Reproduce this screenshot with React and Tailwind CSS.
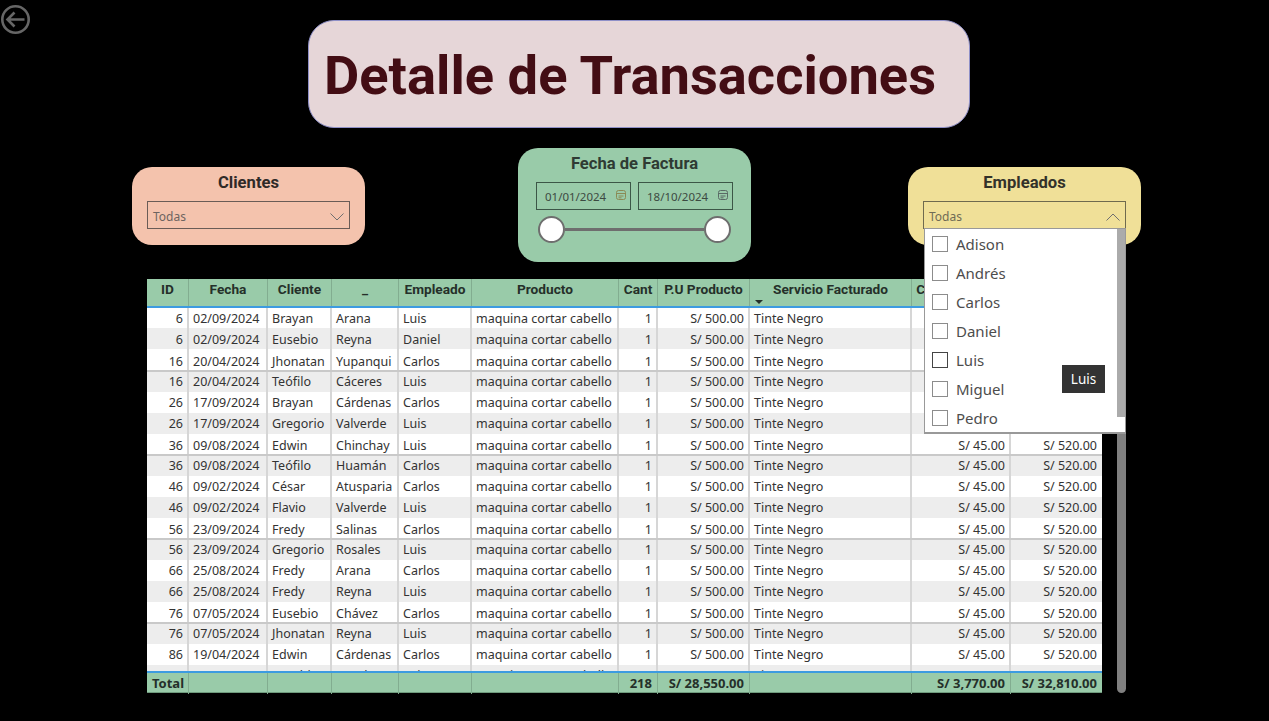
import React from "react";

const rows = [
  ["6", "02/09/2024", "Brayan", "Arana", "Luis"],
  ["6", "02/09/2024", "Eusebio", "Reyna", "Daniel"],
  ["16", "20/04/2024", "Jhonatan", "Yupanqui", "Carlos"],
  ["16", "20/04/2024", "Teófilo", "Cáceres", "Luis"],
  ["26", "17/09/2024", "Brayan", "Cárdenas", "Carlos"],
  ["26", "17/09/2024", "Gregorio", "Valverde", "Luis"],
  ["36", "09/08/2024", "Edwin", "Chinchay", "Luis"],
  ["36", "09/08/2024", "Teófilo", "Huamán", "Carlos"],
  ["46", "09/02/2024", "César", "Atusparia", "Carlos"],
  ["46", "09/02/2024", "Flavio", "Valverde", "Luis"],
  ["56", "23/09/2024", "Fredy", "Salinas", "Carlos"],
  ["56", "23/09/2024", "Gregorio", "Rosales", "Luis"],
  ["66", "25/08/2024", "Fredy", "Arana", "Carlos"],
  ["66", "25/08/2024", "Fredy", "Reyna", "Luis"],
  ["76", "07/05/2024", "Eusebio", "Chávez", "Carlos"],
  ["76", "07/05/2024", "Jhonatan", "Reyna", "Luis"],
  ["86", "19/04/2024", "Edwin", "Cárdenas", "Carlos"],
  ["86", "19/04/2024", "Eusebio", "Rosales", "Luis"],
];

// row heights drift a pixel here and there in the report
const rowHeights = [
  "h-[20px]", "h-[21px]", "h-[23px] border-b-2 border-[#c9c9c9]",
  "h-[20px]", "h-[21px]", "h-[21px]", "h-[22px] border-b-2 border-[#c9c9c9]",
  "h-[20px]", "h-[21px]", "h-[21px]", "h-[22px] border-b-2 border-[#c9c9c9]",
  "h-[20px]", "h-[21px]", "h-[21px]", "h-[22px] border-b-2 border-[#c9c9c9]",
  "h-[20px]", "h-[21px]", "h-[21px]",
];

// and the text sits a little lower in some of them
const rowOffsets = [
  "pt-px", "pt-[3px]", "pt-[4px]",
  "pt-0", "pt-px", "pt-px", "pt-[4px]",
  "pt-0", "pt-px", "pt-px", "pt-[4px]",
  "pt-0", "pt-px", "pt-px", "pt-[4px]",
  "pt-0", "pt-px", "pt-px",
];

const cols = "grid grid-cols-[42px_79px_64px_67px_73px_147px_39px_92px_162px_99px_91px]";
const din = "font-['Roboto',sans-serif] font-bold";
const headers = ["ID", "Fecha", "Cliente", "_", "Empleado", "Producto", "Cant", "P.U Producto", "Servicio Facturado", "Costo Servicio", "Total Factura"];
const employees = ["Adison", "Andrés", "Carlos", "Daniel", "Luis", "Miguel", "Pedro"];

function Chevron({ up }) {
  return (
    <svg width="14" height="8" viewBox="0 0 14 8" fill="none" stroke="#6f6f6f" strokeWidth="1">
      <path d={up ? "M0.5 7.5L7 1L13.5 7.5" : "M0.5 0.5L7 7L13.5 0.5"} />
    </svg>
  );
}

function CalendarIcon({ color }) {
  return (
    <svg width="10" height="10" viewBox="0 0 10 10" fill="none" stroke={color} strokeWidth="1" className="mb-[2px]">
      <rect x="0.5" y="0.5" width="9" height="9" rx="2" />
      <path d="M0.5 3.5H9.5M2.5 6H7.5M2.5 7.8H5.5" />
    </svg>
  );
}

function Cell({ children, right, last, offset }) {
  return (
    <div className={`flex items-center whitespace-nowrap leading-[14px] ${offset} ${last ? "pl-1 pr-[5px]" : "px-1 border-r-2 border-[#d6d6d6]"} ${right ? "justify-end" : ""}`}>
      {children}
    </div>
  );
}

function DateBox({ value, color }) {
  return (
    <div className="w-[95px] h-[28px] border border-[#3c5647] flex items-center justify-between pl-[8px] pr-[4px] text-[11.5px] text-[#3c4a42]">
      <span className="pt-[2px]">{value}</span>
      <CalendarIcon color={color} />
    </div>
  );
}

export default function App() {
  return (
    <div className="w-[1269px] h-[721px] bg-black overflow-hidden font-['Noto_Sans',sans-serif]">
      {/* Title row */}
      <div className="flex items-start h-[128px]">
        <button className="mt-[5px] ml-px w-[29px] h-[29px] shrink-0">
          <svg width="29" height="29" viewBox="0 0 29 29" fill="none" stroke="#666666" strokeWidth="2.6">
            <circle cx="14.5" cy="14.5" r="13.2" />
            <path d="M23.5 14.5H6.5M13.5 7.5L6.5 14.5L13.5 21.5" />
          </svg>
        </button>
        <div className="mt-[20px] ml-[278px] w-[662px] h-[108px] rounded-[26px] bg-[#e6d6d8] border border-[#8f90c8] flex items-center pl-[15px] pt-[4px]">
          <h1 className={`${din} text-[54.3px] text-[#430d14] whitespace-nowrap`}>Detalle de Transacciones</h1>
        </div>
      </div>

      {/* Filters */}
      <div className="flex items-start mt-[20px] ml-[132px] h-[114px] relative z-10">
        <div className="mt-[19px] w-[233px] h-[78px] rounded-[20px] bg-[#f4c3ad] px-[15px] pt-[6px]">
          <div className={`${din} text-[16.6px] text-[#2f2a28] text-center h-[28px] leading-[20px]`}>Clientes</div>
          <div className="h-[28px] border border-[#6a5c56] flex items-center justify-between px-[5px] pt-[3px] text-[12px] text-[#6d6460]">
            <span>Todas</span>
            <Chevron />
          </div>
        </div>

        <div className="ml-[153px] w-[233px] h-[114px] rounded-[20px] bg-[#99cba9] px-[18px] pt-[6px]">
          <div className={`${din} text-[16.6px] text-[#2f3a33] text-center h-[28px] leading-[20px]`}>Fecha de Factura</div>
          <div className="flex justify-between">
            <DateBox value="01/01/2024" color="#8a8a55" />
            <DateBox value="18/10/2024" color="#5a6a66" />
          </div>
          <div className="flex items-center mt-[6px] mx-[2px]">
            <div className="w-[27px] h-[27px] rounded-full bg-white border-2 border-[#6e6e6e] shrink-0" />
            <div className="flex-1 h-[3px] bg-[#6e6e6e]" />
            <div className="w-[27px] h-[27px] rounded-full bg-white border-2 border-[#6e6e6e] shrink-0" />
          </div>
        </div>

        <div className="relative mt-[19px] ml-[157px] w-[233px] h-[78px] rounded-[20px] bg-[#f0e098] px-[15px] pt-[6px]">
          <div className={`${din} text-[16.6px] text-[#33322a] text-center h-[28px] leading-[20px]`}>Empleados</div>
          <div className="w-[203px] h-[28px] border border-[#6f6a4e] flex items-center justify-between px-[5px] pt-[3px] text-[12px] text-[#6f6b55]">
            <span>Todas</span>
            <Chevron up />
          </div>

          {/* Open dropdown */}
          <div className="absolute left-[16px] top-[61px] w-[202px] h-[206px] bg-white border border-[#999999] border-b-2 flex">
            <div className="flex-1 pl-[7px] pt-px">
              {employees.map((name) => (
                <div key={name} className="h-[29px] flex items-center gap-[8px] text-[15px] text-[#4d4d4d]">
                  <span className={`w-[16px] h-[16px] mb-[2px] border ${name === "Luis" ? "border-[#444444]" : "border-[#8c8c8c]"}`} />
                  {name}
                </div>
              ))}
            </div>
            <div className="w-[8px] h-[188px] bg-[#ababab]" />
            <div className="absolute left-[137px] top-[136px] w-[43px] h-[28px] bg-[#333333] text-white text-[13.5px] flex items-center justify-center">Luis</div>
          </div>
        </div>
      </div>

      {/* Table */}
      <div className="flex items-stretch mt-[17px] ml-[147px] h-[414px] gap-[15px]">
        <div className="w-[955px] h-[414px] flex flex-col bg-white text-[12.5px] text-[#333333]">
          <div className={`${cols} h-[29px] bg-[#99cba9] border-b-2 border-[#3d9be0] shrink-0 ${din} text-[13.7px] text-[#25302a]`}>
            {headers.map((h, i) => (
              <div key={h} className={`relative flex justify-center whitespace-nowrap overflow-hidden ${i < headers.length - 1 ? "border-r border-[#82ad90]" : ""}`}>
                {h}
                {h === "Servicio Facturado" && (
                  <span className="absolute left-[5px] bottom-[2px] w-0 h-0 border-x-[4px] border-x-transparent border-t-[4px] border-t-[#25302a]" />
                )}
              </div>
            ))}
          </div>

          <div className="flex-1 overflow-hidden">
            {rows.map((r, i) => (
              <div key={i} className={`${cols} ${rowHeights[i]} ${i % 2 === 1 ? "bg-[#ededed]" : "bg-white"}`}>
                <Cell offset={rowOffsets[i]} right>{r[0]}</Cell>
                <Cell offset={rowOffsets[i]}>{r[1]}</Cell>
                <Cell offset={rowOffsets[i]}>{r[2]}</Cell>
                <Cell offset={rowOffsets[i]}>{r[3]}</Cell>
                <Cell offset={rowOffsets[i]}>{r[4]}</Cell>
                <Cell offset={rowOffsets[i]}>maquina cortar cabello</Cell>
                <Cell offset={rowOffsets[i]} right>1</Cell>
                <Cell offset={rowOffsets[i]} right>S/ 500.00</Cell>
                <Cell offset={rowOffsets[i]}>Tinte Negro</Cell>
                <Cell offset={rowOffsets[i]} right>S/ 45.00</Cell>
                <Cell offset={rowOffsets[i]} right last>S/ 520.00</Cell>
              </div>
            ))}
          </div>

          <div className={`${cols} h-[22px] bg-[#99cba9] border-t-2 border-[#3d9be0] border-b border-b-[#6f9a7d] shrink-0 font-bold text-[13px] text-[#25302a]`}>
            {["Total", "", "", "", "", "", "218", "S/ 28,550.00", "", "S/ 3,770.00", "S/ 32,810.00"].map((t, i) => (
              <div key={i} className={`flex items-center pt-px whitespace-nowrap ${i === 0 ? "pl-[5px]" : "justify-end pr-[5px]"} ${i < 10 ? "border-r border-[#82ad90]" : ""}`}>
                {t}
              </div>
            ))}
          </div>
        </div>

        <div className="w-[9px] mt-[28px] bg-[#808080] rounded-b-[5px]" />
      </div>
    </div>
  );
}
